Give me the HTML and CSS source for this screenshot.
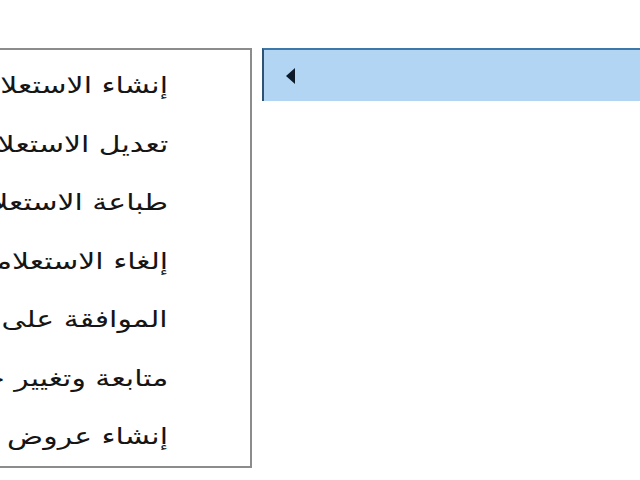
FILE: index.html
```html
<!DOCTYPE html>
<html lang="ar">
<head>
    <meta charset="UTF-8">
    <title>Menu</title>
    <link rel="stylesheet" href="styles.css">
</head>
<body>
    <div class="menu-row">
        <ul class="submenu" dir="rtl">
            <li><span class="label">إنشاء الاستعلامات</span></li>
            <li><span class="label">تعديل الاستعلامات</span></li>
            <li><span class="label">طباعة الاستعلامات</span></li>
            <li><span class="label">إلغاء الاستعلامات</span></li>
            <li><span class="label">الموافقة على الاستعلامات</span></li>
            <li><span class="label">متابعة وتغيير حالة الاستعلامات</span></li>
            <li><span class="label">إنشاء عروض أسعار</span></li>
        </ul>

        <div class="parent-item">
            <span class="arrow"></span>
        </div>
    </div>
</body>
</html>
```

FILE: styles.css
```css
body {
    margin: 0;
    background: #ffffff;
    overflow: hidden;
    font-family: 'DejaVu Sans', sans-serif;
}

.menu-row {
    display: flex;
    align-items: flex-start;
    gap: 10px;
    padding-top: 48px;
}

/* popup list, cut off by the window's left edge */
.submenu {
    list-style: none;
    margin: 0 0 0 -148px;
    padding: 6px 0 0;
    width: 396px;
    flex-shrink: 0;
    border: 2px solid #8c8c8c;
    background: #ffffff;
}

.submenu li {
    height: 58.5px;
    display: flex;
    align-items: center;
    padding-right: 82px;
    white-space: nowrap;
    font-size: 23px;
    color: #151515;
}

/* the old menu font is much wider than DejaVu's arabic */
.label {
    display: inline-block;
    transform: scaleX(1.3);
    transform-origin: right center;
}

/* highlighted item that owns the popup */
.parent-item {
    flex: 1;
    height: 51px;
    margin-right: -20px;
    display: flex;
    align-items: center;
    padding-left: 22px;
    background: #b1d5f3;
    border-top: 2px solid #3d78a8;
    border-left: 2px solid #2f5273;
}

.arrow {
    width: 0;
    height: 0;
    border-top: 8px solid transparent;
    border-bottom: 8px solid transparent;
    border-right: 9px solid #0d1a2a;
}
```
